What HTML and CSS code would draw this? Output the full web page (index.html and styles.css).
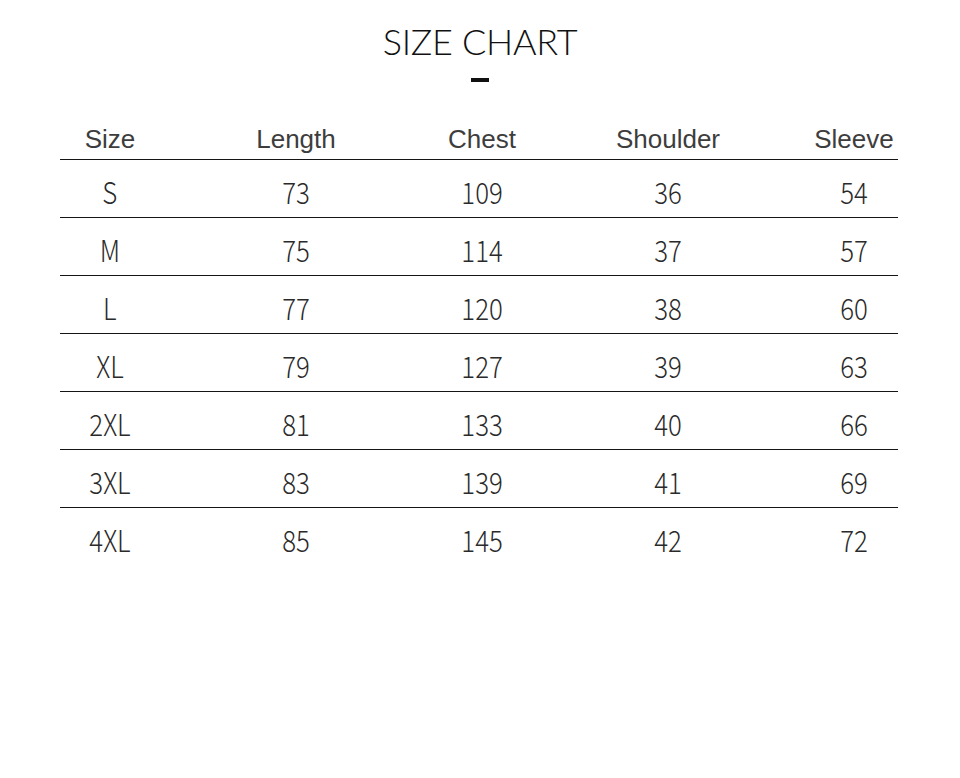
FILE: index.html
```html
<!DOCTYPE html>
<html lang="en">
<head>
<meta charset="utf-8">
<title>Size Chart</title>
<link rel="stylesheet" href="styles.css">
</head>
<body>
<main class="page">
  <h1 class="title">SIZE CHART</h1>
  <div class="dash"></div>
  <section class="table">
    <div class="row head">
      <div class="cell">Size</div>
      <div class="cell">Length</div>
      <div class="cell">Chest</div>
      <div class="cell">Shoulder</div>
      <div class="cell">Sleeve</div>
    </div>
    <div class="row"><div class="cell"><span>S</span></div><div class="cell"><span>73</span></div><div class="cell"><span>109</span></div><div class="cell"><span>36</span></div><div class="cell"><span>54</span></div></div>
    <div class="row"><div class="cell"><span>M</span></div><div class="cell"><span>75</span></div><div class="cell"><span>114</span></div><div class="cell"><span>37</span></div><div class="cell"><span>57</span></div></div>
    <div class="row"><div class="cell"><span>L</span></div><div class="cell"><span>77</span></div><div class="cell"><span>120</span></div><div class="cell"><span>38</span></div><div class="cell"><span>60</span></div></div>
    <div class="row"><div class="cell"><span>XL</span></div><div class="cell"><span>79</span></div><div class="cell"><span>127</span></div><div class="cell"><span>39</span></div><div class="cell"><span>63</span></div></div>
    <div class="row"><div class="cell"><span>2XL</span></div><div class="cell"><span>81</span></div><div class="cell"><span>133</span></div><div class="cell"><span>40</span></div><div class="cell"><span>66</span></div></div>
    <div class="row"><div class="cell"><span>3XL</span></div><div class="cell"><span>83</span></div><div class="cell"><span>139</span></div><div class="cell"><span>41</span></div><div class="cell"><span>69</span></div></div>
    <div class="row last"><div class="cell"><span>4XL</span></div><div class="cell"><span>85</span></div><div class="cell"><span>145</span></div><div class="cell"><span>42</span></div><div class="cell"><span>72</span></div></div>
  </section>
</main>
</body>
</html>
```
FILE: styles.css
```css
html, body {
  margin: 0;
  padding: 0;
  background: #ffffff;
}

.page {
  width: 960px;
  height: 778px;
  overflow: hidden;
}

.title {
  margin: 0;
  padding-top: 22px;
  font-family: "Lato", "Open Sans", sans-serif;
  font-weight: 300;
  font-size: 36px;
  line-height: 38px;
  letter-spacing: -0.3px;
  text-align: center;
  color: #111111;
}

.dash {
  width: 18px;
  height: 4px;
  margin: 18px auto 0;
  background: #111111;
}

.table {
  width: 930px;
  margin: 37px 0 0 17px;
}

.row {
  display: grid;
  grid-template-columns: repeat(5, 186px);
  height: 58px;
  background: linear-gradient(#151515, #151515) 43px 100% / 838px 1px no-repeat;
}

.row.head {
  height: 41px;
}

.row.last {
  background: none;
}

.cell {
  text-align: center;
}

.head .cell {
  font-family: "Liberation Sans", Arial, sans-serif;
  font-size: 26px;
  line-height: 40px;
  color: #3d3d3d;
}

.row:not(.head) .cell {
  font-family: "Noto Sans CJK SC", "Noto Sans", sans-serif;
  font-weight: 200;
  font-size: 30px;
  line-height: 62px;
  color: #2a2a2a;
}

.row:not(.head) .cell span {
  display: inline-block;
  transform: scaleX(0.86);
}
```
